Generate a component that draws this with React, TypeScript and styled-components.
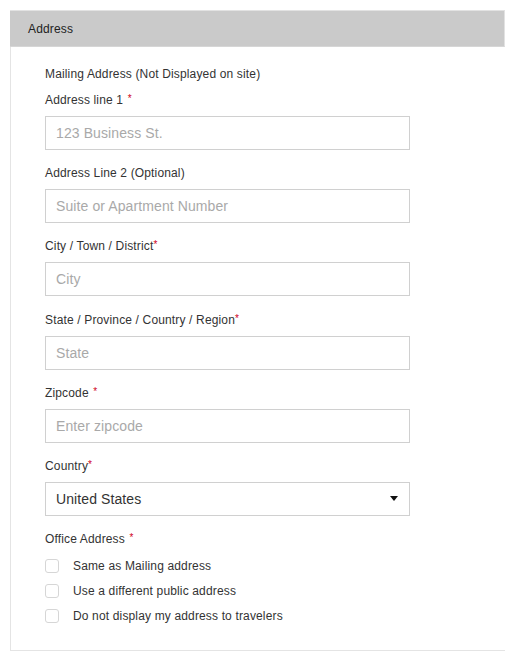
import React from "react";
import styled, { createGlobalStyle } from "styled-components";

const Global = createGlobalStyle`
  html, body { margin: 0; padding: 0; background: #fff; }
  body { font-family: "Liberation Sans", Arial, Helvetica, sans-serif; color: #333; }
  * { box-sizing: border-box; }
`;

const Page = styled.div`
  padding: 10px 0 0 10px;
  width: 528px;
  height: 668px;
`;

const Panel = styled.section`
  width: 495px;
`;

const Header = styled.div`
  height: 37px;
  background: #cacaca;
  border-top: 1px solid #e2e2e2;
  border-bottom: 1px solid #d6d6d6;
  border-right: 1px solid #e2e2e2;
  display: flex;
  align-items: center;
  padding-left: 18px;
  font-size: 12px;
  letter-spacing: 0.15px;
  color: #222;
`;

const Body = styled.div`
  border-left: 1px solid #e4e4e4;
  border-bottom: 1px solid #e4e4e4;
  padding: 17px 0 22px 34px;
  display: flex;
  flex-direction: column;
`;

const Label = styled.div<{ $gap?: number }>`
  font-size: 12px;
  line-height: 18px;
  height: 18px;
  padding-top: 1px;
  letter-spacing: 0.15px;
  color: #333;
  margin-bottom: ${(p) => (p.$gap ?? 8)}px;
`;

const Req = styled.span<{ $tight?: boolean }>`
  color: #d0021b;
  font-size: 10px;
  line-height: 0;
  position: relative;
  top: -2px;
  margin-left: ${(p) => (p.$tight ? 0 : 1)}px;
`;

const Field = styled.div`
  margin-bottom: 13.2px;
  display: flex;
  flex-direction: column;
`;

const Input = styled.input`
  width: 365px;
  height: 34px;
  border: 1px solid #d0d0d0;
  padding: 0 10px;
  font-family: "Liberation Sans", Arial, sans-serif;
  font-size: 14px;
  letter-spacing: 0.1px;
  color: #333;
  outline: none;
  background: #fff;
  &::placeholder { color: #a9a9a9; }
`;

const SelectBox = styled.div`
  width: 365px;
  height: 34px;
  border: 1px solid #d0d0d0;
  padding: 0 10px;
  display: flex;
  align-items: center;
  justify-content: space-between;
  font-size: 14px;
  letter-spacing: 0.1px;
  color: #333;
`;

const Caret = styled.span`
  width: 0;
  height: 0;
  border-left: 4px solid transparent;
  border-right: 4px solid transparent;
  border-top: 5px solid #111;
  margin-right: 1px;
`;

const CheckList = styled.div`
  display: flex;
  flex-direction: column;
`;

const CheckRow = styled.label`
  display: flex;
  align-items: center;
  height: 25px;
  gap: 14px;
  font-size: 12px;
  letter-spacing: 0.15px;
  color: #333;
`;

const Box = styled.span`
  width: 14px;
  height: 14px;
  border: 1px solid #d6d6d6;
  border-radius: 3px;
  background: #fff;
`;

const fields: { label: string; req?: "space" | "tight"; placeholder: string }[] = [
  { label: "Address line 1", req: "space", placeholder: "123 Business St." },
  { label: "Address Line 2 (Optional)", placeholder: "Suite or Apartment Number" },
  { label: "City / Town / District", req: "tight", placeholder: "City" },
  { label: "State / Province / Country / Region", req: "tight", placeholder: "State" },
  { label: "Zipcode", req: "space", placeholder: "Enter zipcode" },
];

const ReqMark = ({ kind }: { kind?: "space" | "tight" }) =>
  kind ? <Req $tight={kind === "tight"}>*</Req> : null;

export default function App() {
  return (
    <Page>
      <Global />
      <Panel>
        <Header>Address</Header>
        <Body>
          <Label>Mailing Address (Not Displayed on site)</Label>
          {fields.map((f) => (
            <Field key={f.label}>
              <Label>
                {f.label}
                {f.req === "space" ? " " : ""}
                <ReqMark kind={f.req} />
              </Label>
              <Input placeholder={f.placeholder} />
            </Field>
          ))}
          <Field>
            <Label>
              Country<ReqMark kind="tight" />
            </Label>
            <SelectBox>
              United States
              <Caret />
            </SelectBox>
          </Field>
          <Label $gap={6}>
            Office Address <ReqMark kind="space" />
          </Label>
          <CheckList>
            {["Same as Mailing address", "Use a different public address", "Do not display my address to travelers"].map((t) => (
              <CheckRow key={t}>
                <Box />
                {t}
              </CheckRow>
            ))}
          </CheckList>
        </Body>
      </Panel>
    </Page>
  );
}
